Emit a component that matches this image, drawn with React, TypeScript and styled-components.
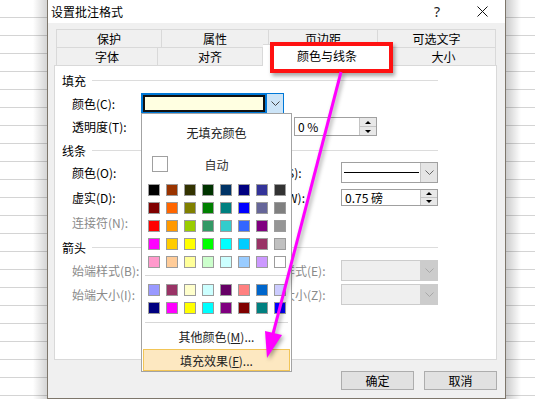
import React from "react";
import styled, { createGlobalStyle } from "styled-components";

const GlobalStyle = createGlobalStyle`
  html, body {
    margin: 0;
    padding: 0;
    background: #fff;
  }
  body {
    font-family: "Noto Sans CJK SC", "Noto Sans", sans-serif;
    font-size: 12px;
    color: #000;
  }
`;

const Screen = styled.div`
  position: relative;
  width: 535px;
  height: 399px;
  overflow: hidden;
  display: flex;
`;

const Sheet = styled.div<{ $side: "left" | "right" }>`
  flex: ${(p) => (p.$side === "left" ? "0 0 47px" : "1")};
  background: ${(p) =>
      p.$side === "left"
        ? "linear-gradient(to right, rgba(0,0,0,0) 33px, rgba(0,0,0,0.17) 47px)"
        : "linear-gradient(to right, rgba(0,0,0,0.2), rgba(0,0,0,0) 15px)"},
    repeating-linear-gradient(to bottom, #fff 0 17px, #d4d4d4 17px 18px);
`;

const Dialog = styled.div`
  flex: 0 0 459px;
  height: 399px;
  box-sizing: border-box;
  border: 1px solid #7d766b;
  border-top: none;
  display: flex;
  flex-direction: column;
  background: #f0f0f0;
`;

const TitleBar = styled.div`
  height: 23px;
  background: #fff;
  display: flex;
  align-items: center;
`;

const Title = styled.div`
  flex: 1;
  padding-left: 3px;
  font-size: 12px;
  line-height: 23px;
`;

const HelpButton = styled.div`
  width: 30px;
  margin-right: 7px;
  text-align: center;
  font-family: "Noto Sans", sans-serif;
  font-size: 14px;
  color: #222;
`;

const CloseButton = styled.div`
  width: 46px;
  height: 23px;
  display: flex;
  align-items: center;
  justify-content: center;
`;

const Body = styled.div`
  flex: 1;
  padding: 6px 8px 0 6px;
  display: flex;
  flex-direction: column;
`;

const TabRow = styled.div`
  display: flex;
  margin-left: 2px;
  height: 18px;
`;

const Tab = styled.div<{ $w: number; $active?: boolean }>`
  flex: 0 0 ${(p) => p.$w}px;
  box-sizing: border-box;
  height: ${(p) => (p.$active ? 22 : 18)}px;
  margin-top: ${(p) => (p.$active ? -3 : 0)}px;
  border-top: 1px solid #d9d9d9;
  border-right: 1px solid #d9d9d9;
  background: ${(p) => (p.$active ? "#fff" : "#f0f0f0")};
  position: relative;
  z-index: ${(p) => (p.$active ? 2 : 0)};
  display: flex;
  align-items: center;
  justify-content: center;
  line-height: 17px;

  &:first-child {
    border-left: 1px solid #d9d9d9;
  }
`;

const Panel = styled.div`
  height: 295px;
  box-sizing: border-box;
  border: 1px solid #d9d9d9;
  background: #fff;
  padding: 6px 0 0 7px;
  display: flex;
  flex-direction: column;
`;

const Heading = styled.div<{ $mt?: number }>`
  display: flex;
  align-items: center;
  gap: 6px;
  width: 376px;
  height: 16px;
  margin-top: ${(p) => p.$mt ?? 0}px;

  &::after {
    content: "";
    flex: 1;
    height: 1px;
    background: #dcdcdc;
  }
`;

const Row = styled.div<{ $mt: number }>`
  display: grid;
  grid-template-columns: 69px 118px 82px 97px;
  align-items: center;
  height: 21px;
  padding-left: 10px;
  margin-top: ${(p) => p.$mt}px;
`;

const Label = styled.span<{ $col?: number; $disabled?: boolean }>`
  grid-column: ${(p) => p.$col ?? 1};
  white-space: nowrap;
  color: ${(p) => (p.$disabled ? "#8a8a8a" : "#000")};
`;

const ColorCombo = styled.div`
  position: relative;
  grid-column: 2 / span 2;
  width: 143px;
  height: 21px;
  box-sizing: border-box;
  border: 1px solid #0078d7;
  display: flex;
`;

const ColorField = styled.div`
  flex: 1;
  background: #0078d7;
  padding: 1px;
  display: flex;
`;

const ColorChip = styled.div`
  flex: 1;
  background: #ffffe1;
  border: 2px solid #111;
`;

const Combo = styled.div<{ $col?: number; $w?: number; $disabled?: boolean }>`
  grid-column: ${(p) => p.$col ?? 4};
  width: ${(p) => p.$w ?? 97}px;
  height: 21px;
  box-sizing: border-box;
  border: 1px solid ${(p) => (p.$disabled ? "#cccccc" : "#a0a0a0")};
  background: ${(p) => (p.$disabled ? "#efefef" : "#fff")};
  display: flex;
`;

const ComboField = styled.div`
  flex: 1;
  display: flex;
  align-items: center;
  padding: 0 1px 0 2px;
`;

const LineSample = styled.div`
  flex: 1;
  height: 1px;
  background: #000;
`;

const DropButton = styled.div<{ $tone: "focus" | "normal" | "disabled" }>`
  width: 16px;
  display: flex;
  align-items: center;
  justify-content: center;
  background: ${(p) =>
    p.$tone === "focus" ? "#cce4f7" : p.$tone === "disabled" ? "#cccccc" : "#e5e5e5"};
  border-left: 1px solid
    ${(p) => (p.$tone === "focus" ? "#0078d7" : p.$tone === "disabled" ? "#cccccc" : "#c4c4c4")};
`;

const Spin = styled.div<{ $col: number; $w: number; $h: number; $offset?: number }>`
  grid-column: ${(p) => p.$col} / span ${(p) => 5 - p.$col};
  justify-self: start;
  margin-left: ${(p) => p.$offset ?? 0}px;
  width: ${(p) => p.$w}px;
  height: ${(p) => p.$h}px;
  box-sizing: border-box;
  border: 1px solid #a0a0a0;
  background: #fff;
  display: flex;
`;

const SpinText = styled.div`
  flex: 1;
  padding-left: 3px;
  display: flex;
  align-items: center;
  white-space: pre;
`;

const SpinButtons = styled.div`
  width: 16px;
  display: flex;
  flex-direction: column;
  border-left: 1px solid #c4c4c4;
`;

const SpinHalf = styled.div`
  flex: 1;
  display: flex;
  align-items: center;
  justify-content: center;
  background: #e8e8e8;

  & + & {
    border-top: 1px solid #c4c4c4;
  }
`;

const Triangle = styled.div<{ $dir: "up" | "down" }>`
  width: 0;
  height: 0;
  border-left: 3px solid transparent;
  border-right: 3px solid transparent;
  ${(p) => (p.$dir === "up" ? "border-bottom: 3px solid #000;" : "border-top: 3px solid #000;")}
`;

const Popup = styled.div`
  position: absolute;
  left: -1px;
  top: 19px;
  width: 151px;
  box-sizing: border-box;
  border: 1px solid #a3a3a3;
  background: #fff;
  z-index: 5;
  display: flex;
  flex-direction: column;
`;

const NoFill = styled.div`
  height: 36px;
  display: flex;
  align-items: center;
  justify-content: center;
  color: #222;
`;

const AutoRow = styled.div`
  height: 28px;
  display: flex;
  align-items: center;
  padding: 0 10px;
`;

const AutoBox = styled.div`
  width: 16px;
  height: 16px;
  box-sizing: border-box;
  border: 1px solid #a0a0a0;
`;

const AutoLabel = styled.span`
  flex: 1;
  text-align: center;
  margin-right: 16px;
  color: #333;
`;

const SwatchGrid = styled.div<{ $mt: number }>`
  display: grid;
  grid-template-columns: repeat(8, 12px);
  gap: 6px;
  padding-left: 6px;
  margin-top: ${(p) => p.$mt}px;
`;

const Swatch = styled.div<{ $c: string }>`
  width: 12px;
  height: 12px;
  box-sizing: border-box;
  border: 1px solid #9c9c9c;
  background: ${(p) => p.$c};
`;

const Separator = styled.div<{ $mt: number }>`
  height: 1px;
  margin: ${(p) => p.$mt}px 3px 0;
  background: #d7d7d7;
`;

const MenuItem = styled.div<{ $hot?: boolean }>`
  height: ${(p) => (p.$hot ? 22 : 26)}px;
  box-sizing: border-box;
  margin: 0 1px;
  display: flex;
  align-items: center;
  justify-content: center;
  color: #222;
  background: ${(p) => (p.$hot ? "#fde8c1" : "transparent")};
  border: 1px solid ${(p) => (p.$hot ? "#f2c556" : "transparent")};
`;

const ButtonBar = styled.div`
  display: flex;
  justify-content: flex-end;
  gap: 10px;
  margin-top: 11px;
`;

const Button = styled.button`
  width: 73px;
  height: 19px;
  padding: 0;
  box-sizing: border-box;
  border: 1px solid #adadad;
  background: #e1e1e1;
  font-family: inherit;
  font-size: 12px;
  color: #000;
`;

const Highlight = styled.div`
  position: absolute;
  left: 270px;
  top: 42px;
  width: 123px;
  height: 31px;
  box-sizing: border-box;
  border: 4px solid #ff1111;
  box-shadow: 2px 3px 4px rgba(0, 0, 0, 0.35);
  z-index: 9;
`;

const ArrowLayer = styled.svg`
  position: absolute;
  left: 0;
  top: 0;
  width: 535px;
  height: 399px;
  pointer-events: none;
  z-index: 10;
  filter: drop-shadow(2px 2px 2px rgba(0, 0, 0, 0.35));
`;

const palette = [
  ["#000000", "#993300", "#333300", "#003300", "#003366", "#000080", "#333399", "#333333"],
  ["#800000", "#FF6600", "#808000", "#008000", "#008080", "#0000FF", "#666699", "#808080"],
  ["#FF0000", "#FF9900", "#99CC00", "#339966", "#33CCCC", "#3366FF", "#800080", "#969696"],
  ["#FF00FF", "#FFCC00", "#FFFF00", "#00FF00", "#00FFFF", "#00CCFF", "#993366", "#C0C0C0"],
  ["#FF99CC", "#FFCC99", "#FFFF99", "#CCFFCC", "#CCFFFF", "#99CCFF", "#CC99FF", "#FFFFFF"],
];

const chartColors = [
  ["#9999FF", "#993366", "#FFFFCC", "#CCFFFF", "#660066", "#FF8080", "#0066CC", "#CCCCFF"],
  ["#000080", "#FF00FF", "#FFFF00", "#00FFFF", "#800080", "#800000", "#008080", "#0000FF"],
];

const topTabs: [string, number][] = [["保护", 106], ["属性", 107], ["页边距", 109], ["可选文字", 118]];
const bottomTabs: [string, number][] = [["字体", 102], ["对齐", 105], ["颜色与线条", 129], ["大小", 104]];

const Chevron: React.FC<{ color?: string }> = ({ color = "#444" }) => (
  <svg width="9" height="5" viewBox="0 0 9 5">
    <polyline points="0.5,0.5 4.5,4.5 8.5,0.5" fill="none" stroke={color} strokeWidth="1" />
  </svg>
);

const SpinBox: React.FC<{ value: string; col: number; w: number; h: number; offset?: number }> = ({
  value,
  col,
  w,
  h,
  offset,
}) => (
  <Spin $col={col} $w={w} $h={h} $offset={offset}>
    <SpinText>{value}</SpinText>
    <SpinButtons>
      <SpinHalf>
        <Triangle $dir="up" />
      </SpinHalf>
      <SpinHalf>
        <Triangle $dir="down" />
      </SpinHalf>
    </SpinButtons>
  </Spin>
);

const DisabledCombo: React.FC<{ col?: number; w?: number }> = ({ col, w }) => (
  <Combo $col={col} $w={w} $disabled>
    <ComboField />
    <DropButton $tone="disabled">
      <Chevron color="#a8a8a8" />
    </DropButton>
  </Combo>
);

const ColorPopup: React.FC = () => (
  <Popup>
    <NoFill>无填充颜色</NoFill>
    <AutoRow>
      <AutoBox />
      <AutoLabel>自动</AutoLabel>
    </AutoRow>
    <SwatchGrid $mt={6}>
      {palette.flat().map((c, i) => (
        <Swatch key={i} $c={c} />
      ))}
    </SwatchGrid>
    <Separator $mt={7} />
    <SwatchGrid $mt={8}>
      {chartColors.flat().map((c, i) => (
        <Swatch key={i} $c={c} />
      ))}
    </SwatchGrid>
    <Separator $mt={8} />
    <MenuItem>
      其他颜色(<u>M</u>)...
    </MenuItem>
    <MenuItem $hot>
      填充效果(<u>F</u>)...
    </MenuItem>
  </Popup>
);

export default function App() {
  return (
    <Screen>
      <GlobalStyle />
      <Sheet $side="left" />
      <Dialog>
        <TitleBar>
          <Title>设置批注格式</Title>
          <HelpButton>?</HelpButton>
          <CloseButton>
            <svg width="11" height="11" viewBox="0 0 11 11">
              <path d="M0.5 0.5 L10.5 10.5 M10.5 0.5 L0.5 10.5" stroke="#111" strokeWidth="1" />
            </svg>
          </CloseButton>
        </TitleBar>
        <Body>
          <TabRow>
            {topTabs.map(([t, w]) => (
              <Tab key={t} $w={w}>
                {t}
              </Tab>
            ))}
          </TabRow>
          <TabRow>
            {bottomTabs.map(([t, w]) => (
              <Tab key={t} $w={w} $active={t === "颜色与线条"}>
                {t}
              </Tab>
            ))}
          </TabRow>
          <Panel>
            <Heading>填充</Heading>
            <Row $mt={5}>
              <Label>颜色(C):</Label>
              <ColorCombo>
                <ColorField>
                  <ColorChip />
                </ColorField>
                <DropButton $tone="focus">
                  <Chevron />
                </DropButton>
                <ColorPopup />
              </ColorCombo>
            </Row>
            <Row $mt={2}>
              <Label>透明度(T):</Label>
              <SpinBox value="0 %" col={3} w={83} h={19} offset={35} />
            </Row>

            <Heading $mt={5}>线条</Heading>
            <Row $mt={4}>
              <Label>颜色(O):</Label>
              <Label $col={3}>线型(S):</Label>
              <Combo>
                <ComboField>
                  <LineSample />
                </ComboField>
                <DropButton $tone="normal">
                  <Chevron color="#666" />
                </DropButton>
              </Combo>
            </Row>
            <Row $mt={4}>
              <Label>虚实(D):</Label>
              <Label $col={3}>粗细(W):</Label>
              <SpinBox value="0.75 磅" col={4} w={97} h={17} />
            </Row>
            <Row $mt={4}>
              <Label $disabled>连接符(N):</Label>
            </Row>

            <Heading $mt={6}>箭头</Heading>
            <Row $mt={5}>
              <Label $disabled>始端样式(B):</Label>
              <Label $col={3} $disabled>
                末端样式(E):
              </Label>
              <DisabledCombo />
            </Row>
            <Row $mt={3}>
              <Label $disabled>始端大小(I):</Label>
              <Label $col={3} $disabled>
                末端大小(Z):
              </Label>
              <DisabledCombo />
            </Row>
          </Panel>
          <ButtonBar>
            <Button>确定</Button>
            <Button>取消</Button>
          </ButtonBar>
        </Body>
      </Dialog>
      <Sheet $side="right" />

      <Highlight />
      <ArrowLayer viewBox="0 0 535 399">
        <line x1="341" y1="72" x2="273" y2="334" stroke="#ff00ff" strokeWidth="3" />
        <polygon points="267,358 282,335 265,331" fill="#ff00ff" />
      </ArrowLayer>
    </Screen>
  );
}
